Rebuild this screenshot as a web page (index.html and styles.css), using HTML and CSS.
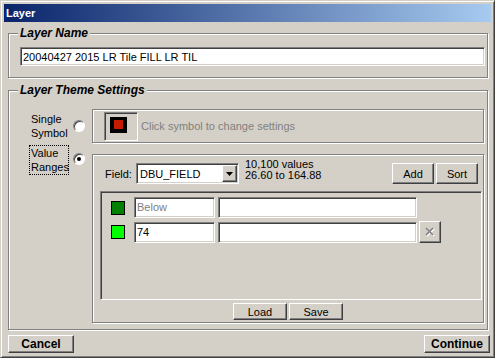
FILE: index.html
```html
<!doctype html>
<html>
  <head>
    <meta charset="utf-8">
    <link rel="stylesheet" href="styles.css">
  </head>
  <body>
    <div class="window">
      <div class="titlebar">Layer</div>
      <div class="dialog">

        <div class="group group-name">
          <div class="group-title">Layer Name</div>
          <div class="edit name-edit">20040427 2015 LR Tile FILL LR TIL</div>
        </div>

        <div class="group group-theme">
          <div class="group-title">Layer Theme Settings</div>

          <div class="option option-single">
            <div class="option-label">Single<br>Symbol</div>
            <div class="radio"></div>
            <div class="panel single-panel">
              <div class="symbol-btn"><div class="symbol"><div class="symbol-fill"></div></div></div>
              <div class="hint">Click symbol to change settings</div>
            </div>
          </div>

          <div class="option option-ranges">
            <div class="option-label focused">Value<br>Ranges</div>
            <div class="radio checked"></div>
            <div class="panel ranges-panel">
              <div class="field-row">
                <span class="field-label">Field:</span>
                <div class="combo">
                  <span class="combo-text">DBU_FIELD</span>
                  <div class="btn combo-btn">
                    <svg width="7" height="4" viewBox="0 0 7 4"><polygon points="0,0 7,0 3.5,4" fill="#000"/></svg>
                  </div>
                </div>
                <div class="field-info">10,100 values<br>26.60 to 164.88</div>
                <div class="btn btn-small btn-add">Add</div>
                <div class="btn btn-small">Sort</div>
              </div>

              <div class="range-list">
                <div class="range-row">
                  <div class="swatch swatch-below"></div>
                  <div class="edit from-edit placeholder">Below</div>
                  <div class="edit label-edit"></div>
                </div>
                <div class="range-row">
                  <div class="swatch swatch-74"></div>
                  <div class="edit from-edit">74</div>
                  <div class="edit label-edit"></div>
                  <div class="btn del-btn">
                    <svg width="10" height="10" viewBox="0 0 10 10">
                      <path d="M2 2 L9 9 M9 2 L2 9" stroke="#fff" stroke-width="1.6"/>
                      <path d="M1 1 L8 8 M8 1 L1 8" stroke="#808080" stroke-width="1.6"/>
                    </svg>
                  </div>
                </div>
              </div>

              <div class="list-btns">
                <div class="btn btn-list">Load</div>
                <div class="btn btn-list">Save</div>
              </div>
            </div>
          </div>
        </div>

        <div class="footer">
          <div class="btn btn-main">Cancel</div>
          <div class="btn btn-main">Continue</div>
        </div>

      </div>
    </div>
  </body>
</html>
```

FILE: styles.css
```css
body {
  margin: 0;
  background-color: #d4d0c8;
  font-family: "Liberation Sans", Arial, sans-serif;
  font-size: 11px;
  color: #000;
}

.window {
  box-sizing: border-box;
  width: 495px;
  height: 358px;
  border: 1px solid;
  border-color: #d4d0c8 #404040 #404040 #d4d0c8;
  box-shadow: inset 1px 1px #fff, inset -1px -1px #808080;
  padding: 3px;
  display: flex;
  flex-direction: column;
}

.titlebar {
  height: 18px;
  padding-left: 2px;
  background: linear-gradient(to right, #0a246a, #a6caf0);
  color: #fff;
  font: bold 11px/18px "Liberation Sans", Arial, sans-serif;
}

.dialog {
  flex: 1;
  display: flex;
  flex-direction: column;
  padding: 11px 3px 0 4px;
}

/* etched frames */
.group, .panel {
  position: relative;
  box-sizing: border-box;
  border: 1px solid #808080;
  box-shadow: inset 1px 1px #fff, 1px 1px #fff;
}

.group-title {
  position: absolute;
  left: 9px;
  top: -8px;
  padding: 0 2px;
  background-color: #d4d0c8;
  font: italic bold 12px/14px "Liberation Sans", Arial, sans-serif;
}

.group-name {
  height: 45px;
  padding: 13px 2px 0 11px;
}

.group-theme {
  margin-top: 12px;
  height: 240px;
  padding: 18px 3px 0 20px;
}

/* sunken edit boxes */
.edit {
  box-sizing: border-box;
  background-color: #fff;
  border: 1px solid;
  border-color: #808080 #fff #fff #808080;
  box-shadow: inset 1px 1px #404040, inset -1px -1px #d4d0c8;
  padding: 1px 2px 0;
  white-space: nowrap;
  overflow: hidden;
}

.name-edit {
  height: 19px;
  line-height: 16px;
}

.placeholder {
  color: #808080;
}

/* raised buttons */
.btn {
  box-sizing: border-box;
  display: flex;
  align-items: center;
  justify-content: center;
  flex: none;
  border: 1px solid;
  border-color: #fff #404040 #404040 #fff;
  box-shadow: inset -1px -1px #808080;
  background-color: #d4d0c8;
}

.option {
  display: flex;
}

.option-single {
  align-items: center;
}

.option-ranges {
  margin-top: 11px;
  align-items: flex-start;
}

.option-label {
  box-sizing: border-box;
  flex: none;
  width: 40px;
  height: 30px;
  border: 1px dotted transparent;
  padding-left: 1px;
  line-height: 14px;
  margin-right: 4px;
}

.option-label.focused {
  border-color: #000;
  margin-top: -9px;
}

.radio {
  box-sizing: border-box;
  position: relative;
  flex: none;
  width: 12px;
  height: 12px;
  margin-right: 7px;
  border-radius: 50%;
  background-color: #fff;
  border: 1px solid;
  border-color: #808080 #fff #fff #808080;
  box-shadow: inset 1px 1px #404040;
}

.radio.checked {
  margin-top: -1px;
}

.radio.checked::after {
  content: "";
  position: absolute;
  left: 3px;
  top: 3px;
  width: 4px;
  height: 4px;
  border-radius: 50%;
  background-color: #000;
}

.panel {
  flex: 1;
}

.single-panel {
  height: 34px;
  display: flex;
  align-items: center;
  padding-left: 11px;
}

.symbol-btn {
  box-sizing: border-box;
  width: 34px;
  height: 29px;
  margin-right: 3px;
  padding: 4px 0 0 5px;
  border: 1px solid;
  border-color: #808080 #fff #fff #808080;
  box-shadow: inset 1px 1px #404040;
}

.symbol {
  width: 17px;
  height: 16px;
  background-color: #000;
  display: flex;
  align-items: center;
  justify-content: center;
}

.symbol-fill {
  width: 9px;
  height: 9px;
  background-color: #c41c00;
}

.hint {
  color: #808080;
}

.ranges-panel {
  height: 169px;
  padding: 8px 1px 2px 7px;
  display: flex;
  flex-direction: column;
}

.field-row {
  display: flex;
  align-items: center;
  height: 21px;
  padding: 0 4px 0 5px;
}

.field-label {
  flex: none;
  width: 31px;
}

.combo {
  box-sizing: border-box;
  display: flex;
  align-items: center;
  width: 103px;
  height: 21px;
  padding: 0 1px 0 3px;
  background-color: #fff;
  border: 1px solid;
  border-color: #808080 #fff #fff #808080;
  box-shadow: inset 1px 1px #404040, inset -1px -1px #d4d0c8;
}

.combo-btn {
  margin-left: auto;
  width: 15px;
  height: 17px;
}

.field-info {
  align-self: flex-start;
  margin: -4px 0 0 6px;
  line-height: 11px;
  white-space: nowrap;
}

.btn-small {
  width: 42px;
  height: 21px;
}

.btn-add {
  margin-left: auto;
  margin-right: 2px;
}

.range-list {
  box-sizing: border-box;
  height: 109px;
  margin-top: 7px;
  padding: 5px 0 0 10px;
  display: flex;
  flex-direction: column;
  gap: 3px;
  border: 1px solid;
  border-color: #808080 #fff #fff #808080;
  box-shadow: inset 1px 1px #404040, inset -1px -1px #d4d0c8;
}

.range-row {
  display: flex;
  align-items: center;
}

.swatch {
  box-sizing: border-box;
  width: 14px;
  height: 14px;
  margin-right: 9px;
  border: 1px solid #000;
}

.swatch-below {
  background-color: #008000;
}

.swatch-74 {
  background-color: #00ff00;
}

.from-edit, .label-edit {
  height: 21px;
  line-height: 17px;
}

.from-edit {
  width: 81px;
  margin-right: 3px;
}

.label-edit {
  width: 199px;
  margin-right: 2px;
}

.del-btn {
  width: 22px;
  height: 22px;
}

.list-btns {
  display: flex;
  justify-content: center;
  gap: 2px;
  margin-top: 3px;
  padding-right: 6px;
}

.btn-list {
  width: 54px;
  height: 17px;
}

.footer {
  display: flex;
  justify-content: space-between;
  margin: 5px -2px 0 0;
}

.btn-main {
  width: 66px;
  height: 18px;
  font: bold 12px "Liberation Sans", Arial, sans-serif;
}
```
